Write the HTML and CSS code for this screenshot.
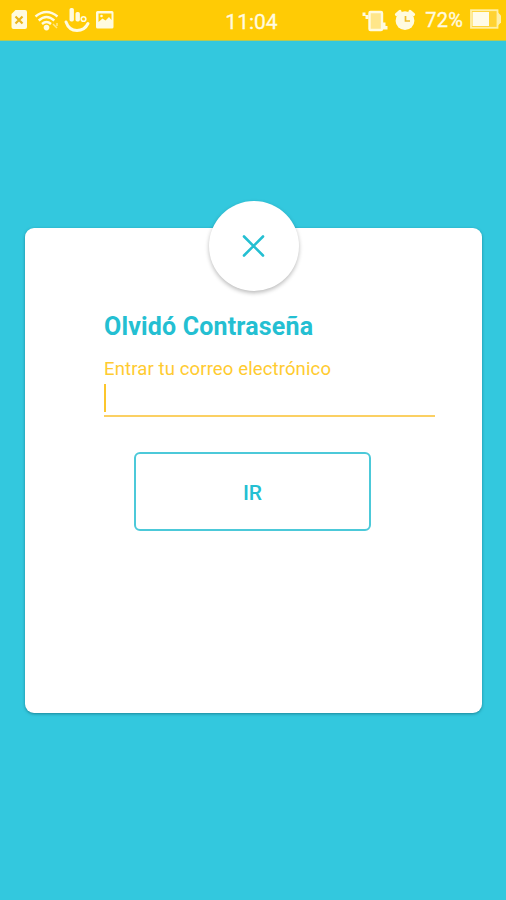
FILE: index.html
```html
<!DOCTYPE html>
<html lang="es">
<head>
<meta charset="utf-8">
<title>Olvidó Contraseña</title>
<link rel="stylesheet" href="styles.css">
</head>
<body>
<header class="status">
  <svg class="icons-left" width="110" height="24" viewBox="8 8 110 24" fill="#fffbe0">
    <path fill-rule="evenodd" d="M15.500 10H25Q27 10 27 12V27Q27 29 25 29H13.500Q11.500 29 11.500 27V14Z"/>
    <path d="M15.500 16.500L22.500 23.500M22.500 16.500L15.500 23.500" stroke="#eab61c" stroke-width="2.200"/>
    <g fill="none" stroke="#fffbe0" stroke-width="2.400">
      <path d="M35.500 16.500Q46.500 7.500 57.500 16.500"/>
      <path d="M38.700 20.500Q46.500 13.500 54.300 20.500"/>
      <path d="M42 24Q46.500 20 51 24"/>
      <path d="M53 24l4 4M57 23v3" stroke-width="1.500" opacity=".6"/>
    </g>
    <circle cx="46.500" cy="27.600" r="2.800"/>
    <rect x="69.500" y="8" width="4.400" height="13.500" rx="1.700"/>
    <rect x="75.500" y="12" width="4.400" height="9.500" rx="1.700"/>
    <circle cx="83.500" cy="19" r="2.300" fill="none" stroke="#fffbe0" stroke-width="1.600"/>
    <path d="M66 22Q69 30.500 77 30.500Q84.500 30.500 88 23.500" fill="none" stroke="#fffbe0" stroke-width="3" stroke-linecap="round"/>
    <path fill-rule="evenodd" d="M97.500 11H112Q113.500 11 113.500 12.500V27Q113.500 28.500 112 28.500H97.500Q96 28.500 96 27V12.500Q96 11 97.500 11ZM98.500 13.500V22L102.500 18.500L105.500 20.500L109 17L111.500 20V13.500Z"/>
    <circle cx="101.500" cy="16" r="1.300"/>
  </svg>
  <span class="time">11:04</span>
  <div class="right">
    <svg width="56" height="24" viewBox="362 8 56 24" fill="#fffbe0">
      <rect x="369.500" y="12" width="12.500" height="18" rx="1" fill="#ffe68a" stroke="#fffbe0" stroke-width="2.400"/>
      <path d="M362.500 12.500h3v2.500h3v4h-3v-3h-3zM382 22.500h3.500v3.500h2v3.500h-5.500z"/>
      <path d="M396.500 14.500l3.500-3M413.500 14.500l-3.500-3" stroke="#fffbe0" stroke-width="3.200" stroke-linecap="round"/>
      <circle cx="405" cy="20.700" r="9.400"/>
      <path d="M405.500 16V21H410" fill="none" stroke="#f0bd28" stroke-width="1.700"/>
    </svg>
    <span class="percent">72%</span>
    <svg class="battery" width="32" height="20" viewBox="470 9 32 20">
      <rect x="471" y="10.200" width="26.500" height="17.600" fill="#ffd232" stroke="#ffefa6" stroke-width="1.800"/>
      <rect x="472.500" y="12" width="16.500" height="14" fill="#fffbe8"/>
      <path d="M498 12.500l3 3v7l-3 3z" fill="#ffefa6"/>
    </svg>
  </div>
</header>
<main class="screen">
  <section class="card">
    <button class="close" aria-label="Cerrar">
      <svg width="24" height="24" viewBox="0 0 24 24" fill="none" stroke="#24bfd2" stroke-width="2.600" stroke-linecap="round"><path d="M2 2.500L21 21.500M21 2.500L2 21.500"/></svg>
    </button>
    <h1 class="title">Olvidó Contraseña</h1>
    <label class="label">Entrar tu correo electrónico</label>
    <div class="field"><span class="caret"></span></div>
    <button class="submit">IR</button>
  </section>
</main>
</body>
</html>
```
FILE: styles.css
```css
* { box-sizing: border-box; }
body {
  margin: 0;
  height: 900px;
  background: #33c8de;
  font-family: Roboto, sans-serif;
  overflow: hidden;
}
.status {
  height: 41px;
  background: #ffcb05;
  border-bottom: 1px solid #b5ca55;
  color: #fffbe0;
  display: grid;
  grid-template-columns: 1fr auto 1fr;
  padding: 8px 4px 0 1px;
}
.status svg { display: block; }
.icons-left { margin-left: 7px; }
.time { font-size: 21px; line-height: 28px; -webkit-text-stroke: .3px #fffbe0; }
.right { display: flex; justify-content: flex-end; }
.percent { font-size: 20px; line-height: 24px; letter-spacing: .2px; margin: 0 7px 0 7px; -webkit-text-stroke: .3px #fffbe0; }
.battery { margin-top: 1px; }
.screen { padding: 187px 24px 0 25px; }
.card {
  height: 485px;
  background: #fff;
  border-radius: 9px;
  box-shadow: 0 1px 3px rgba(0, 70, 85, .5);
  display: flex;
  flex-direction: column;
  padding: 0 47px 0 79px;
}
.close {
  width: 90px;
  height: 90px;
  flex: none;
  margin: -27px 0 0 105px;
  padding: 0;
  border: 0;
  border-radius: 50%;
  background: #fff;
  box-shadow: 0 2px 4px rgba(0, 0, 0, .27);
  display: flex;
  align-items: center;
  justify-content: center;
}
.title {
  margin: 21px 0 0;
  font-size: 25px;
  line-height: 30px;
  font-weight: 700;
  letter-spacing: .17px;
  color: #24bfd2;
  white-space: nowrap;
}
.label {
  margin-top: 15px;
  font-size: 18.5px;
  line-height: 24px;
  letter-spacing: .13px;
  color: #ffcb30;
  white-space: nowrap;
}
.field {
  height: 36px;
  border-bottom: 2px solid #fbd063;
  padding-top: 3px;
}
.caret { display: block; width: 2px; height: 28px; background: #fcc62c; }
.submit {
  width: 237px;
  height: 79px;
  margin: 35px 0 0 30px;
  padding: 2px 0 0;
  border: 2px solid #4cc9d9;
  border-radius: 6px;
  background: #fff;
  color: #24bfd2;
  font: 500 21px Roboto, sans-serif;
}
```
